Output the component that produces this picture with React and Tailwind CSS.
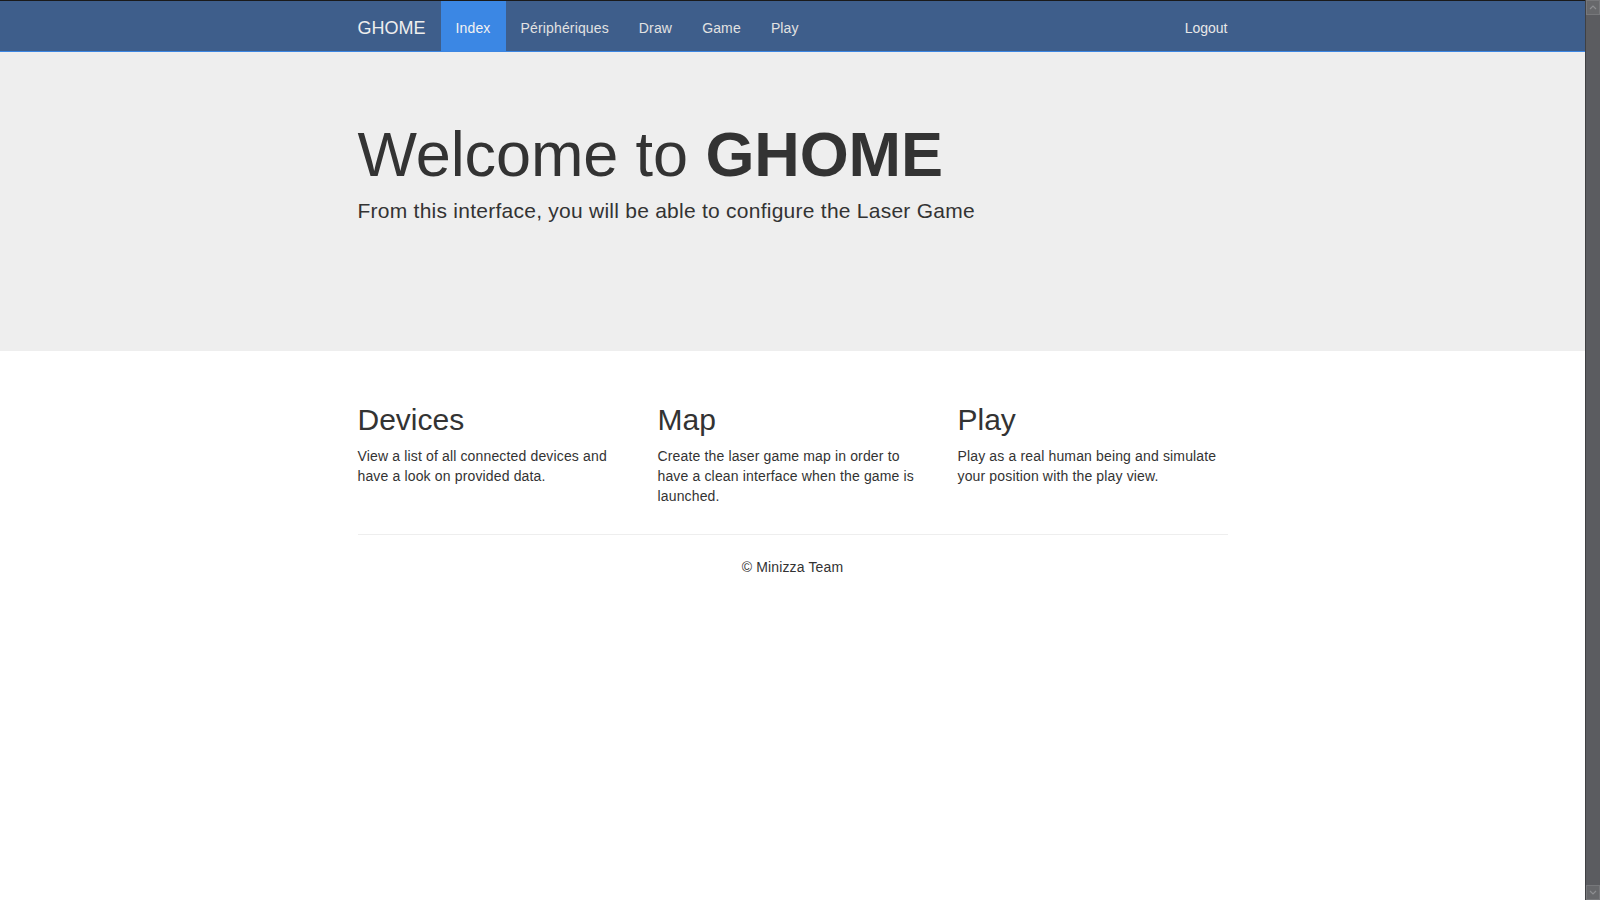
import React from 'react';

const navLinks = ['Index', 'Périphériques', 'Draw', 'Game', 'Play'];

const features = [
  {
    title: 'Devices',
    text: 'View a list of all connected devices and have a look on provided data.',
  },
  {
    title: 'Map',
    text: 'Create the laser game map in order to have a clean interface when the game is launched.',
  },
  {
    title: 'Play',
    text: 'Play as a real human being and simulate your position with the play view.',
  },
];

const Scrollbar = () => (
  <div className="flex h-screen w-[15px] shrink-0 flex-col border-l border-[#3f4043] bg-[#5b5c60]">
    <div className="flex h-[15px] items-center justify-center border border-[#77787b] bg-[#67686b]">
      <svg width="8" height="5" viewBox="0 0 8 5">
        <path d="M1 4 L4 1 L7 4" fill="none" stroke="#8d8e91" strokeWidth="1.2" />
      </svg>
    </div>
    <div className="flex-1" />
    <div className="flex h-[15px] items-center justify-center border border-[#77787b] bg-[#67686b]">
      <svg width="8" height="5" viewBox="0 0 8 5">
        <path d="M1 1 L4 4 L7 1" fill="none" stroke="#8d8e91" strokeWidth="1.2" />
      </svg>
    </div>
  </div>
);

export default function App() {
  return (
    <div className="flex h-screen w-full overflow-hidden bg-white font-['Liberation_Sans',Arial,sans-serif] text-[14px] leading-[20px] text-[#333]">
      <div className="flex min-w-0 flex-1 flex-col">
        <div className="h-px bg-[#1a1a1a]" />
        <nav className="border-b border-[#3c86e2] bg-[#3e5e8b]">
          <div className="mx-auto flex h-[50px] w-[900px] px-[15px]">
            <a className="-ml-[15px] flex items-center px-[15px] pt-[3px] text-[18px] text-[#eee]">GHOME</a>
            <ul className="flex">
              {navLinks.map((link, i) => (
                <li key={link}>
                  <a
                    className={`flex h-[50px] items-center px-[15px] pt-[3px] tracking-[0.15px] ${
                      i === 0 ? 'bg-[#3b87e4] text-[#f2f2f2]' : 'text-[#e2e2e2]'
                    }`}
                  >
                    {link}
                  </a>
                </li>
              ))}
            </ul>
            <a className="-mr-[15px] ml-auto flex items-center px-[15px] pt-[3px] text-[#e8e8e8]">Logout</a>
          </div>
        </nav>

        <div className="h-[299px] bg-[#eee] pt-[48px]">
          <div className="mx-auto w-[900px] px-[15px]">
            <h1 className="mt-[20px] mb-[7px] text-[63px] leading-[1.1] tracking-[-0.1px] text-[#333]">
              Welcome to <b>GHOME</b>
            </h1>
            <p className="mb-[15px] text-[21px] leading-[30px] tracking-[0.25px]">
              From this interface, you will be able to configure the Laser Game
            </p>
          </div>
        </div>

        <div className="mx-auto mt-[32px] w-[900px] px-[15px]">
          <div className="-mx-[15px] grid grid-cols-3">
            {features.map((f) => (
              <div key={f.title} className="px-[15px]">
                <h2 className="mt-[20px] mb-[10px] text-[30px] leading-[33px]">{f.title}</h2>
                <p className="mb-[8px] tracking-[0.15px]">{f.text}</p>
              </div>
            ))}
          </div>
          <hr className="mt-[20px] mb-[22px] border-t border-[#eee]" />
          <footer className="text-center">
            <p className="mb-[10px] tracking-[0.15px]">© Minizza Team</p>
          </footer>
        </div>
      </div>
      <Scrollbar />
    </div>
  );
}
